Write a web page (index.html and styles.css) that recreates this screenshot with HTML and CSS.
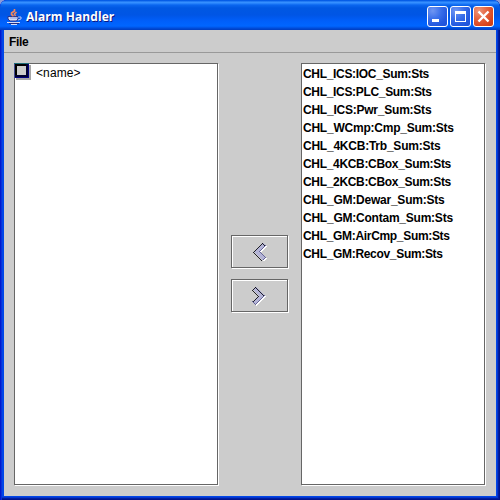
FILE: index.html
```html
<!DOCTYPE html>
<html lang="en">
<head>
<meta charset="utf-8">
<title>Alarm Handler</title>
<link rel="stylesheet" href="styles.css">
</head>
<body>
<div class="window">
  <header class="titlebar">
    <svg class="java" width="16" height="16" viewBox="0 0 16 16" fill="none">
      <path d="M1 7.500H11V10L9.500 12H3L1 10Z" fill="#d4dcf5" stroke="#29358d"/>
      <path d="M11 8h3v2l-3 1" stroke="#b8c4f0"/>
      <path d="M3 9h7" stroke="#8797d8"/>
      <path d="M0 13.500h13M4 15.500h6" stroke="#d6dcf8"/>
      <path d="M2 14.500h10" stroke="#202b80"/>
      <path d="M7.500 0v2L4.500 4v1.500l2 1.500M9.500 3l-2 2 1 2" stroke="#f3875a" stroke-width="1.600"/>
    </svg>
    <h1 class="title">Alarm Handler</h1>
    <div class="controls">
      <button class="ctl" aria-label="Minimize"><svg width="21" height="21" viewBox="0 0 21 21"><path d="M5 13h7v3H5z" fill="#fff"/></svg></button>
      <button class="ctl" aria-label="Maximize"><svg width="21" height="21" viewBox="0 0 21 21"><path fill-rule="evenodd" d="M5 5h11v11H5zM6 8v7h9V8z" fill="#fff"/></svg></button>
      <button class="ctl close" aria-label="Close"><svg width="21" height="21" viewBox="0 0 21 21"><path d="M5.500 5.500l10 10M15.500 5.500l-10 10" stroke="#fff" stroke-width="2.400"/></svg></button>
    </div>
  </header>
  <nav class="menubar">File</nav>
  <main class="content">
    <section class="pane tree">
      <div class="node">
        <svg class="box" width="17" height="17" viewBox="0 0 17 17" shape-rendering="crispEdges"><path d="M2 2h15v15H2z" fill="#a6a6a6"/><path d="M0 0h15v15H0z" fill="#000080"/><path d="M0 0h15v1H0z" fill="#1c6c78"/><path d="M0 1h1v14H0z" fill="#444c90"/><path d="M1 1h13v2H3v11H1z" fill="#000"/><path d="M1 12h13v2H1zM12 1h2v13h-2z" fill="#000030"/><path d="M3 3h9v9H3z" fill="#ccc"/></svg>
        <span class="label">&lt;name&gt;</span>
      </div>
    </section>
    <div class="transfer">
      <button class="move" aria-label="Move left"><svg width="17" height="19" viewBox="0 0 17 19" shape-rendering="crispEdges">
        <path d="M12.500 1.500l-9 9 9 9 3.500-3.500-6-5.500 6-6z" fill="#fff"/>
        <path d="M11.500 .5l-9 9 9 9 3-3-6-6 6-6z" fill="#b4b4d6"/>
        <path d="M14.500 3.500l-6 6 6 6-3 3" fill="none" stroke="#666699"/>
        <path d="M14.500 3.500l-3-3-9 9 9 9" fill="none" stroke="#0c0c14" stroke-width=".9"/>
      </svg></button>
      <button class="move" aria-label="Move right"><svg width="17" height="19" viewBox="0 0 17 19" shape-rendering="crispEdges">
        <path d="M5.500 1.500l-3 3 6 6-6 6 3 3 9.500-9z" fill="#fff"/>
        <path d="M4.500 .5l-3 3 6 6-6 6 3 3 9-9z" fill="#b4b4d6"/>
        <path d="M1.500 15.500l3 3 9-9" fill="none" stroke="#666699"/>
        <path d="M13.500 9.500l-9-9-3 3 6 6-6 6" fill="none" stroke="#0c0c14" stroke-width=".9"/>
      </svg></button>
    </div>
    <ul class="pane list">
      <li class="tight">CHL_ICS:IOC_Sum:Sts</li>
      <li class="tight">CHL_ICS:PLC_Sum:Sts</li>
      <li class="loose">CHL_ICS:Pwr_Sum:Sts</li>
      <li class="loose">CHL_WCmp:Cmp_Sum:Sts</li>
      <li class="loose">CHL_4KCB:Trb_Sum:Sts</li>
      <li class="tight">CHL_4KCB:CBox_Sum:Sts</li>
      <li class="tight">CHL_2KCB:CBox_Sum:Sts</li>
      <li class="loose">CHL_GM:Dewar_Sum:Sts</li>
      <li class="loose">CHL_GM:Contam_Sum:Sts</li>
      <li class="tight">CHL_GM:AirCmp_Sum:Sts</li>
      <li class="tight">CHL_GM:Recov_Sum:Sts</li>
    </ul>
  </main>
</div>
</body>
</html>
```
FILE: styles.css
```css
* { box-sizing: border-box; }
body {
  margin: 0;
  background: #8c9bd8;
  font-family: "Liberation Sans", Arial, sans-serif;
  font-size: 12px;
  color: #000;
}
.window {
  width: 500px;
  height: 500px;
  display: flex;
  flex-direction: column;
  padding: 0 4px 4px;
  border-radius: 7px 7px 0 0;
  overflow: hidden;
  background: #0046e8;
  box-shadow: inset 1px 0 #0019cf, inset 2px 0 #0831d9, inset -1px -1px #00138c, inset -2px -2px #001ea0, inset -3px -3px #0335d0;
}
.titlebar {
  flex: none;
  height: 30px;
  margin: 0 -4px;
  padding: 3px 6px 0 7px;
  display: flex;
  align-items: center;
  background: linear-gradient(#0058e6 0, #0b62e8 1px, #3a93ff 2px, #2f8bff 3px, #0a66ef 5px, #0058e2 8px, #0055e5 15px, #005ffa 21px, #0066ff 26px, #005bf0 27px, #0044cc 29px, #003dc0 30px);
}
.java { flex: none; }
.title {
  flex: 1;
  margin: 1px 0 0 3px;
  font: bold 12px/16px "Open Sans", "Liberation Sans", sans-serif;
  letter-spacing: 0.05px;
  color: #fff;
  text-shadow: 1px 1px #0a1883;
}
.controls { display: flex; gap: 2px; }
.ctl {
  width: 21px;
  height: 21px;
  padding: 0;
  border: 1px solid #fff;
  border-radius: 3px;
  background: radial-gradient(circle at 25% 20%, #7096f2, #3a6fea 40%, #2459df 70%, #1c50d8);
}
.ctl svg { display: block; margin: -1px; }
.close { background: radial-gradient(circle at 25% 20%, #ec957a, #e4633f 40%, #d9441d 75%, #c63c12); }
.menubar {
  flex: none;
  height: 23px;
  padding-left: 5px;
  border-bottom: 1px solid #999;
  background: #ccc;
  font-weight: bold;
  line-height: 24px;
  letter-spacing: -0.3px;
}
.content {
  flex: 1;
  min-height: 0;
  display: flex;
  padding: 10px;
  background: #ccc;
}
.pane {
  margin: 0 1px 1px 0;
  border: 1px solid #666;
  background: #fff;
  box-shadow: 1px 1px #fff;
}
.tree { width: 204px; }
.node { display: flex; height: 19px; }
.box { margin: -1px 0 0 -1px; }
.label { padding-left: 5px; line-height: 18px; letter-spacing: 0.1px; }
.transfer {
  width: 82px;
  display: flex;
  flex-direction: column;
  align-items: center;
  justify-content: center;
  gap: 11px;
  padding-bottom: 3px;
}
.move {
  width: 57px;
  height: 33px;
  margin: 0 1px 0 0;
  padding: 0;
  border: 1px solid #666;
  background: #ccc;
  box-shadow: inset 1px 1px #fff, 1px 1px #fff;
  display: flex;
  align-items: center;
  justify-content: center;
}
.move svg { overflow: visible; }
.list {
  flex: 1;
  padding: 1px 0 0 1px;
  list-style: none;
  font-weight: bold;
}
.list li { height: 18px; line-height: 19px; white-space: nowrap; }
.tight { letter-spacing: -0.32px; }
.loose { letter-spacing: -0.23px; }
```
